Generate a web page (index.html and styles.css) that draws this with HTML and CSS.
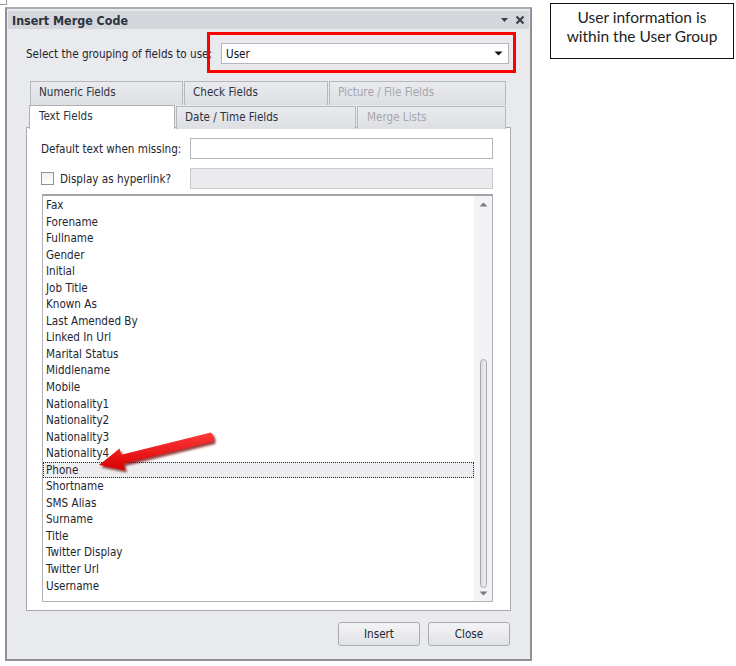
FILE: index.html
```
<!DOCTYPE html>
<html>
<head>
<meta charset="utf-8">
<link rel="stylesheet" href="styles.css">
</head>
<body>
<div class="page">
  <div class="corner"></div>
  <div class="dialog">
    <div class="titlebar">
      <span class="title">Insert Merge Code</span>
      <span class="title-icons">
        <svg width="9" height="6" viewBox="0 0 9 6"><path d="M1 1 L8 1 L4.5 5 Z" fill="#3c4048"/></svg>
        <svg width="10" height="10" viewBox="0 0 10 10"><path d="M1.5 1.5 L8.5 8.5 M8.5 1.5 L1.5 8.5" stroke="#3c4048" stroke-width="2.2"/></svg>
      </span>
    </div>
    <div class="body">
      <div class="group-row">
        <span class="label">Select the grouping of fields to use:</span>
        <div class="combo">
          <span>User</span>
          <svg width="9" height="5" viewBox="0 0 9 5"><path d="M0.5 0.5 L8.5 0.5 L4.5 4.5 Z" fill="#111"/></svg>
        </div>
      </div>
      <div class="tabs">
        <div class="tabrow back">
          <div class="tab t-num">Numeric Fields</div>
          <div class="tab t-check">Check Fields</div>
          <div class="tab t-pic disabled">Picture / File Fields</div>
        </div>
        <div class="tabrow front">
          <div class="tab t-text active">Text Fields</div>
          <div class="tab t-date">Date / Time Fields</div>
          <div class="tab t-merge disabled">Merge Lists</div>
        </div>
      </div>
      <div class="panel">
        <div class="field-row">
          <span class="label">Default text when missing:</span>
          <div class="input"></div>
        </div>
        <div class="field-row second">
          <span class="check-label"><span class="checkbox"></span>Display as hyperlink?</span>
          <div class="input disabled-input"></div>
        </div>
        <div class="listbox">
          <div class="items">
            <div class="item">Fax</div>
            <div class="item">Forename</div>
            <div class="item">Fullname</div>
            <div class="item">Gender</div>
            <div class="item">Initial</div>
            <div class="item">Job Title</div>
            <div class="item">Known As</div>
            <div class="item">Last Amended By</div>
            <div class="item">Linked In Url</div>
            <div class="item">Marital Status</div>
            <div class="item">Middlename</div>
            <div class="item">Mobile</div>
            <div class="item">Nationality1</div>
            <div class="item">Nationality2</div>
            <div class="item">Nationality3</div>
            <div class="item">Nationality4</div>
            <div class="item selected">Phone</div>
            <div class="item">Shortname</div>
            <div class="item">SMS Alias</div>
            <div class="item">Surname</div>
            <div class="item">Title</div>
            <div class="item">Twitter Display</div>
            <div class="item">Twitter Url</div>
            <div class="item">Username</div>
          </div>
          <div class="scrollbar">
            <svg class="arrow-up" width="9" height="5" viewBox="0 0 9 5"><path d="M0.5 4.5 L8.5 4.5 L4.5 0.5 Z" fill="#7a7d86"/></svg>
            <div class="track"><div class="thumb"></div></div>
            <svg class="arrow-down" width="9" height="5" viewBox="0 0 9 5"><path d="M0.5 0.5 L8.5 0.5 L4.5 4.5 Z" fill="#7a7d86"/></svg>
          </div>
        </div>
      </div>
      <div class="buttons">
        <button class="btn">Insert</button>
        <button class="btn">Close</button>
      </div>
    </div>
  </div>
  <div class="note">User information is<br>within the User Group</div>
  <div class="redbox"></div>
  <svg class="redarrow" width="130" height="55" viewBox="90 425 130 55">
    <defs>
      <linearGradient id="rg" x1="0" y1="0" x2="0" y2="1">
        <stop offset="0" stop-color="#ff3a3a"/>
        <stop offset="1" stop-color="#d80000"/>
      </linearGradient>
      <filter id="blur" x="-20%" y="-50%" width="140%" height="200%"><feGaussianBlur stdDeviation="1.2"/></filter>
    </defs>
    <g transform="translate(2,2.5)" filter="url(#blur)">
      <path d="M99 465 L119.6 448.5 L121.2 454.8 L210.9 432.6 Q215 436.5 213.1 441.4 L123.4 463.6 L125 469.9 Z" fill="#7a0000" opacity="0.75"/>
    </g>
    <path d="M99 465 L119.6 448.5 L121.2 454.8 L210.9 432.6 Q215 436.5 213.1 441.4 L123.4 463.6 L125 469.9 Z" fill="url(#rg)"/>
  </svg>
</div>
</body>
</html>
```
FILE: styles.css
```
* { box-sizing: border-box; }
html, body { margin: 0; padding: 0; background: #fff; }
body {
  width: 736px;
  height: 666px;
  overflow: hidden;
  font-family: "DejaVu Sans Condensed", "DejaVu Sans", sans-serif;
  font-size: 11.6px;
  color: #1f2530;
}
.page {
  position: relative;
  width: 736px;
  height: 666px;
  display: flex;
  align-items: flex-start;
}
.corner {
  position: absolute;
  left: 0; top: 0;
  width: 7px; height: 5px;
  border-bottom: 1px solid #9a9a9a;
  border-right: 1px solid #9a9a9a;
}
.dialog {
  margin: 7px 0 0 5px;
  width: 527px;
  height: 654px;
  background: #e9eaee;
  border: 2px solid #8e9298;
  border-top-color: #a9adb3;
  padding: 1px 1px 0 1px;
  display: flex;
  flex-direction: column;
}
.titlebar {
  height: 18px;
  margin-top: 1px;
  background: #d5d7dc;
  display: flex;
  align-items: center;
  justify-content: space-between;
  padding: 0 4px 0 4px;
}
.title {
  font-weight: bold;
  font-size: 12.4px;
  color: #2c3340;
}
.title-icons {
  display: flex;
  align-items: center;
  gap: 6px;
}
.body {
  flex: 1;
  display: flex;
  flex-direction: column;
  padding: 0 19px 0 18px;
}
.group-row {
  display: flex;
  align-items: center;
  margin-top: 14px;
  height: 21px;
}
.group-row .label { width: 195px; white-space: nowrap; }
.combo {
  width: 288px;
  height: 21px;
  background: #fff;
  border: 1px solid #b3b5bb;
  display: flex;
  align-items: center;
  justify-content: space-between;
  padding: 0 5px 0 4px;
  color: #111;
}
.tabs {
  margin-top: 17px;
  display: flex;
  flex-direction: column;
  position: relative;
  z-index: 2;
}
.tabrow { display: flex; height: 24px; }
.tabrow.back { padding-left: 4px; height: 24px; }
.tabrow.front { padding-left: 3px; height: 23px; }
.tab {
  height: 24px;
  border: 1px solid #b6b8be;
  border-bottom: none;
  background: linear-gradient(#eaebee, #dedfe3);
  padding: 3px 0 0 8px;
  color: #2c3340;
  margin-right: 1px;
  white-space: nowrap;
}
.tabrow.front .tab { height: 23px; margin-top: 1px; }
.tab.disabled { color: #a4a6ad; }
.t-num { width: 153px; }
.t-check { width: 144px; }
.t-pic { width: 177px; }
.t-text { width: 146px; }
.t-date { width: 180px; padding-left: 8px; }
.t-merge { width: 149px; padding-left: 9px; }
.tabrow.front .tab.active {
  background: #fff;
  margin-top: 0;
  height: 24px;
  padding-left: 9px;
  padding-top: 3px;
  border-color: #aeb0b6;
}
.panel {
  margin-top: -1px;
  margin-left: 0;
  width: 485px;
  height: 484px;
  background: #fff;
  border: 1px solid #a7a9af;
  padding: 10px 17px 0 14px;
  display: flex;
  flex-direction: column;
  position: relative;
  z-index: 1;
}
.field-row {
  display: flex;
  align-items: center;
  height: 21px;
}
.field-row.second { margin-top: 9px; }
.field-row .label, .check-label { width: 149px; white-space: nowrap; }
.check-label { display: flex; align-items: center; }
.checkbox {
  width: 13px; height: 13px;
  border: 1px solid #8f939a;
  background: linear-gradient(#f0f0f2, #fff);
  margin-right: 6px;
}
.input {
  width: 303px;
  height: 21px;
  border: 1px solid #b3b5bb;
  background: #fff;
}
.disabled-input { background: #ebebee; border-color: #c8c9ce; }
.listbox {
  margin-top: 5px;
  margin-left: 1px;
  width: 451px;
  height: 408px;
  border: 1px solid #b0b2b8;
  border-top: 2px solid #a2a4aa;
  display: flex;
}
.items {
  flex: 1;
  padding-top: 1px;
}
.item {
  height: 16.56px;
  line-height: 16.56px;
  padding-left: 3px;
  color: #1f2530;
  white-space: nowrap;
}
.item.selected {
  background: #ededf0;
  outline: 1px dotted #222;
  outline-offset: -1px;
}
.scrollbar {
  width: 18px;
  background: #f3f3f6;
  display: flex;
  flex-direction: column;
  align-items: center;
  padding: 6px 0 5px;
}
.track {
  flex: 1;
  width: 100%;
  position: relative;
}
.thumb {
  position: absolute;
  left: 6px;
  width: 7px;
  top: 152px;
  bottom: 3px;
  border: 1px solid #a6a9b2;
  border-radius: 4px;
  background: linear-gradient(90deg, #dcdde2, #eceef1);
}
.buttons {
  display: flex;
  justify-content: flex-end;
  gap: 8px;
  margin-top: 11px;
  padding-right: 0;
}
.btn {
  width: 82px;
  height: 24px;
  border: 1px solid #a9abb1;
  border-radius: 3px;
  background: linear-gradient(#f4f4f6, #e2e3e7);
  font-family: "DejaVu Sans Condensed", "DejaVu Sans", sans-serif;
  font-size: 11.6px;
  color: #1f2530;
  padding: 0;
}
.note {
  margin: 3px 0 0 18px;
  width: 184px;
  height: 56px;
  border: 1px solid #111;
  font-family: "Lato", "DejaVu Sans", sans-serif;
  font-size: 15.5px;
  line-height: 19px;
  text-align: center;
  padding-top: 4px;
  color: #222;
}
.redbox {
  position: absolute;
  z-index: 5;
  left: 207px;
  top: 32px;
  width: 309px;
  height: 41px;
  border: 3px solid #ff0000;
}
.redarrow {
  position: absolute;
  z-index: 5;
  left: 90px;
  top: 425px;
}
```
